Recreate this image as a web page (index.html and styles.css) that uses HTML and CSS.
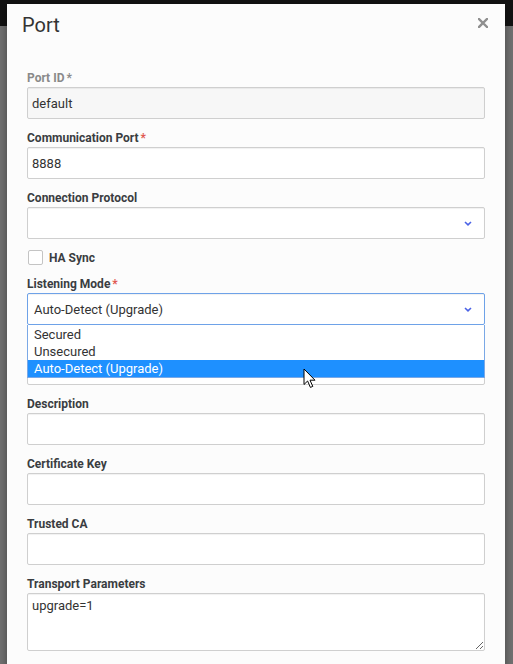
FILE: index.html
```html
<!DOCTYPE html>
<html>
<head>
<meta charset="utf-8">
<link rel="stylesheet" href="styles.css">
</head>
<body>
<div class="modal">
  <div class="modal-header">
    <h1 class="title">Port</h1>
    <button class="close" aria-label="Close">
      <svg width="10" height="10" viewBox="0 0 10 10"><path d="M1 1 L9 9 M9 1 L1 9" stroke="#8f8f8f" stroke-width="2.4" stroke-linecap="square"/></svg>
    </button>
  </div>
  <form class="modal-body">
    <div class="field">
      <label class="label disabled">Port ID<span class="req">*</span></label>
      <input class="input readonly" type="text" value="default" readonly>
    </div>
    <div class="field">
      <label class="label">Communication Port<span class="req red">*</span></label>
      <input class="input" type="text" value="8888">
    </div>
    <div class="field">
      <label class="label">Connection Protocol</label>
      <div class="input select">
        <span class="select-value"></span>
        <svg class="chev" width="8" height="5" viewBox="0 0 8 5"><path d="M1 1 L4 3.8 L7 1" fill="none" stroke="#4b63e6" stroke-width="1.6"/></svg>
      </div>
    </div>
    <div class="check-row">
      <span class="checkbox"></span>
      <span class="check-label">HA Sync</span>
    </div>
    <div class="field dropdown-host">
      <label class="label">Listening Mode<span class="req red">*</span></label>
      <div class="input select focused">
        <span class="select-value">Auto-Detect (Upgrade)</span>
        <svg class="chev" width="8" height="5" viewBox="0 0 8 5"><path d="M1 1 L4 3.8 L7 1" fill="none" stroke="#4b63e6" stroke-width="1.6"/></svg>
      </div>
      <ul class="dropdown">
        <li class="option">Secured</li>
        <li class="option">Unsecured</li>
        <li class="option active">Auto-Detect (Upgrade)</li>
      </ul>
      <svg class="cursor" width="14" height="21" viewBox="0 0 14 21"><path d="M1 1 L1 16.5 L4.6 13 L7.4 19.4 L9.8 18.4 L7 12.2 L12 12.2 Z" fill="#fff" stroke="#000" stroke-width="1" stroke-linejoin="round"/></svg>
    </div>
    <div class="field">
      <span class="label"></span>
      <div class="input"></div>
    </div>
    <div class="field">
      <label class="label">Description</label>
      <input class="input" type="text" value="">
    </div>
    <div class="field">
      <label class="label">Certificate Key</label>
      <input class="input" type="text" value="">
    </div>
    <div class="field">
      <label class="label">Trusted CA</label>
      <input class="input" type="text" value="">
    </div>
    <div class="field">
      <label class="label">Transport Parameters</label>
      <textarea class="input textarea">upgrade=1</textarea>
    </div>
  </form>
</div>
</body>
</html>
```

FILE: styles.css
```css
html, body {
  margin: 0;
  padding: 0;
  height: 100%;
  overflow: hidden;
}
body {
  background: linear-gradient(to bottom, #131313 0, #131313 26px, #727272 26px, #727272 100%);
  font-family: Roboto, "Liberation Sans", sans-serif;
  color: #333;
}
.modal {
  margin: 4px 0 0 7px;
  width: 498px;
  height: 680px;
  background: #fcfcfc;
  box-shadow: 0 3px 9px rgba(0, 0, 0, 0.4);
}
.modal-header {
  display: flex;
  justify-content: space-between;
  align-items: flex-start;
  padding: 9px 17px 0 15px;
  height: 57px;
  box-sizing: border-box;
}
.title {
  margin: 0;
  font-size: 20px;
  line-height: 24px;
  font-weight: 400;
  color: #333;
}
.close {
  border: 0;
  background: none;
  padding: 0;
  margin-top: 5px;
  width: 10px;
  height: 10px;
  display: block;
}
.close svg { display: block; }
.modal-body {
  display: flex;
  flex-direction: column;
  padding: 9px 20px 0;
  margin: 0;
}
.field {
  display: flex;
  flex-direction: column;
  margin-bottom: 11px;
}
.label {
  display: block;
  height: 17px;
  line-height: 17px;
  font-size: 12px;
  font-weight: 700;
  color: #3a3d41;
}
.label.disabled { color: #8a8a8a; }
.req {
  margin-left: 2px;
  font-weight: 700;
  color: #8a8a8a;
}
.req.red { color: #e0584f; }
.input {
  box-sizing: border-box;
  width: 458px;
  height: 32px;
  margin: 0;
  padding: 0 4px;
  border: 1px solid #cfcfcf;
  border-radius: 2px;
  background: #fff;
  box-shadow: inset 0 1px 1px rgba(0, 0, 0, 0.06);
  font-family: Roboto, "Liberation Sans", sans-serif;
  font-size: 13px;
  color: #333;
  outline: none;
}
.input.readonly { background: #f7f7f7; }
.select {
  display: flex;
  align-items: center;
  justify-content: space-between;
  padding: 0 12px 0 6px;
}
.select.focused {
  border-color: #6ea2e8;
}
.chev { display: block; }
.check-row {
  display: flex;
  align-items: center;
  height: 15px;
  margin-bottom: 11px;
}
.checkbox {
  box-sizing: border-box;
  width: 15px;
  height: 15px;
  margin-left: 1px;
  border: 1px solid #c4c4c4;
  border-radius: 2px;
  background: #fff;
}
.check-label {
  margin-left: 6px;
  font-size: 12px;
  font-weight: 700;
  color: #3a3d41;
}
.dropdown-host { position: relative; }
.dropdown {
  position: absolute;
  left: 0;
  top: 49px;
  width: 458px;
  box-sizing: border-box;
  margin: 0;
  padding: 1px 0 0;
  list-style: none;
  background: #fff;
  border: 1px solid #7aa8e6;
  border-top: 0;
  z-index: 2;
}
.option {
  height: 17px;
  line-height: 17px;
  padding: 0 6px;
  font-size: 13px;
  color: #333;
}
.option.active {
  background: #1e90ff;
  color: #fff;
}
.cursor {
  position: absolute;
  left: 276px;
  top: 92px;
  z-index: 3;
}
.textarea {
  height: 58px;
  padding: 3px 4px;
  resize: vertical;
  line-height: 18px;
}
```
